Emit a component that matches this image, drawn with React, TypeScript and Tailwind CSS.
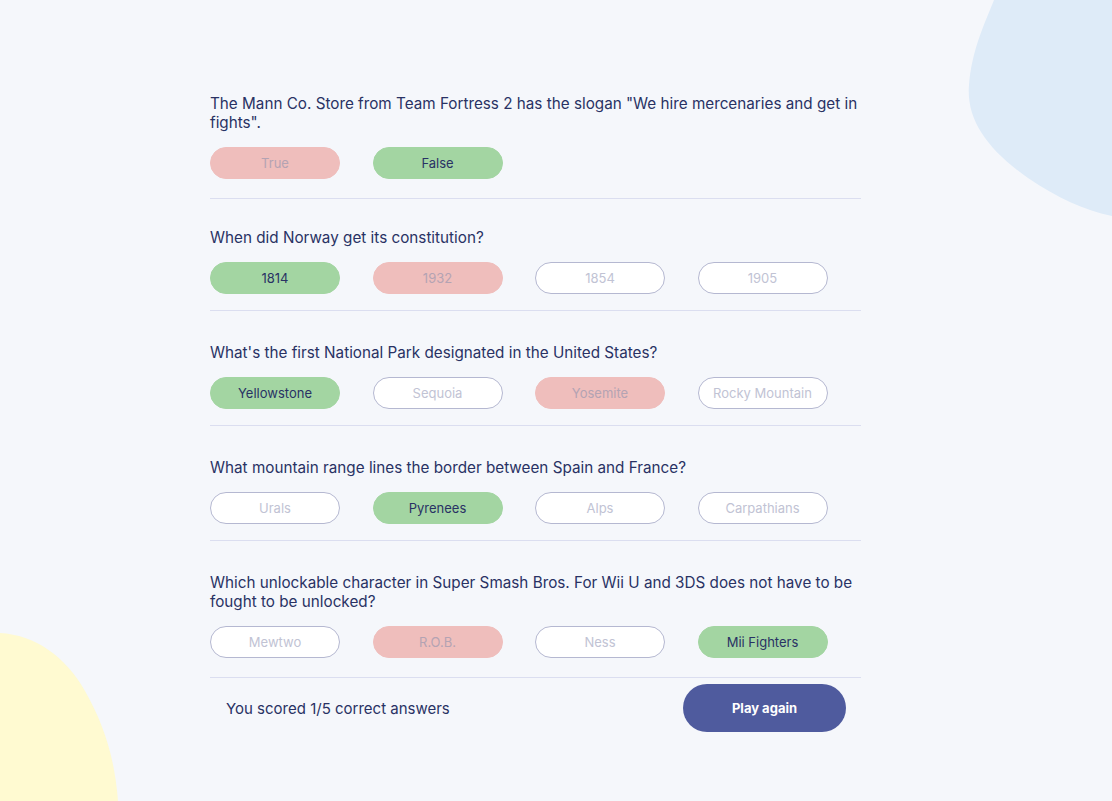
type Answer = {
  label: string
  state: 'correct' | 'wrong' | 'idle'
}

type Question = {
  text: string
  block: string
  answers: Answer[]
}

const questions: Question[] = [
  {
    text: 'The Mann Co. Store from Team Fortress 2 has the slogan "We hire mercenaries and get in fights".',
    block: 'pb-[19px]',
    answers: [
      { label: 'True', state: 'wrong' },
      { label: 'False', state: 'correct' },
    ],
  },
  {
    text: 'When did Norway get its constitution?',
    block: 'pt-[29px] pb-4',
    answers: [
      { label: '1814', state: 'correct' },
      { label: '1932', state: 'wrong' },
      { label: '1854', state: 'idle' },
      { label: '1905', state: 'idle' },
    ],
  },
  {
    text: "What's the first National Park designated in the United States?",
    block: 'pt-8 pb-4',
    answers: [
      { label: 'Yellowstone', state: 'correct' },
      { label: 'Sequoia', state: 'idle' },
      { label: 'Yosemite', state: 'wrong' },
      { label: 'Rocky Mountain', state: 'idle' },
    ],
  },
  {
    text: 'What mountain range lines the border between Spain and France?',
    block: 'pt-8 pb-4',
    answers: [
      { label: 'Urals', state: 'idle' },
      { label: 'Pyrenees', state: 'correct' },
      { label: 'Alps', state: 'idle' },
      { label: 'Carpathians', state: 'idle' },
    ],
  },
  {
    text: 'Which unlockable character in Super Smash Bros. For Wii U and 3DS does not have to be fought to be unlocked?',
    block: 'pt-8 pb-[19px]',
    answers: [
      { label: 'Mewtwo', state: 'idle' },
      { label: 'R.O.B.', state: 'wrong' },
      { label: 'Ness', state: 'idle' },
      { label: 'Mii Fighters', state: 'correct' },
    ],
  },
]

const answerStyles = {
  correct: 'bg-[#a3d5a2] border-[#a3d5a2] text-[#293264]',
  wrong: 'bg-[#efbebc] border-[#efbebc] text-[#b4a3b3]',
  idle: 'bg-white border-[#b5b8d1] text-[#c1c3d4]',
}

function AnswerButton({ answer }: { answer: Answer }) {
  return (
    <button
      className={`h-8 w-[130px] shrink-0 rounded-full border pt-px text-[13px] ${answerStyles[answer.state]}`}
    >
      {answer.label}
    </button>
  )
}

export default function App() {
  return (
    <div
      className="relative h-[801px] overflow-hidden bg-[#f5f7fb] text-[#293264]"
      style={{ fontFamily: 'Inter, "Noto Sans", sans-serif' }}
    >
      {/* decorative blobs */}
      <svg
        className="absolute right-0 top-0"
        width="144"
        height="216"
        viewBox="0 0 144 216"
      >
        <path
          d="M26 0 C16 25 4 50 1 85 C-2 120 20 150 60 178 C90 198 115 210 144 216 L144 0 Z"
          fill="#deebf8"
        />
      </svg>
      <svg
        className="absolute bottom-0 left-0"
        width="120"
        height="170"
        viewBox="0 0 120 170"
      >
        <path
          d="M0 2 C35 4 65 25 85 60 C105 95 115 130 118 170 L0 170 Z"
          fill="#fffad1"
        />
      </svg>

      <div className="relative ml-[210px] flex w-[651px] flex-col pt-[94px]">
        {questions.map((q) => (
          <div key={q.text} className={`border-b border-[#dbdef0] ${q.block}`}>
            <h2 className="text-[15.25px] leading-[19px]">{q.text}</h2>
            <div className="mt-[15px] flex gap-[32.5px]">
              {q.answers.map((a) => (
                <AnswerButton key={a.label} answer={a} />
              ))}
            </div>
          </div>
        ))}

        <div className="flex items-center justify-between pl-4 pr-[15px] pt-[6px]">
          <p className="pt-[3px] text-[15px]">You scored 1/5 correct answers</p>
          <button className="h-12 w-[163px] rounded-[24px] bg-[#4f5b9e] pt-[2px] text-[13px] font-bold text-white">
            Play again
          </button>
        </div>
      </div>
    </div>
  )
}
